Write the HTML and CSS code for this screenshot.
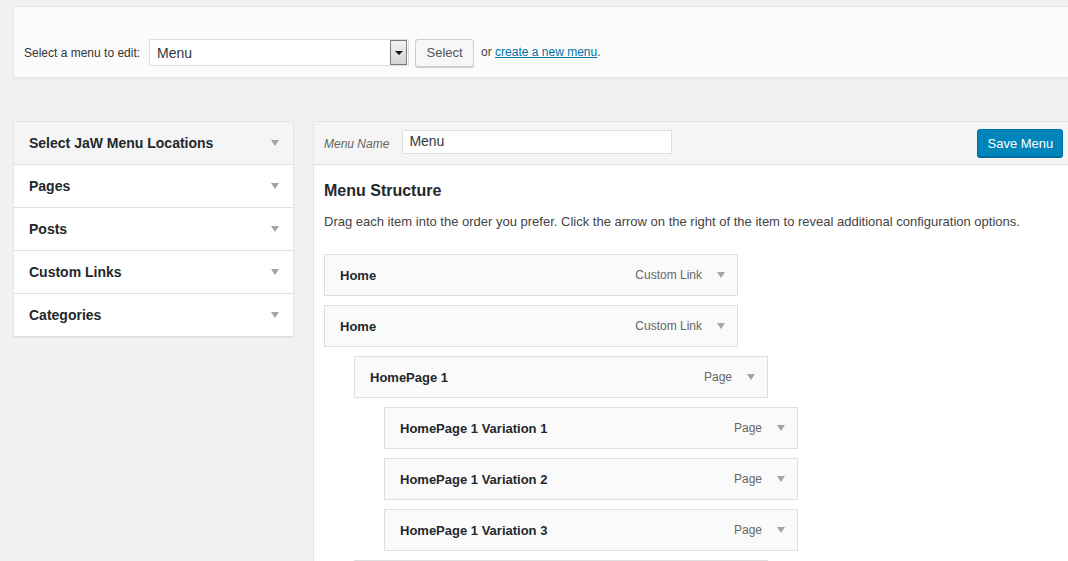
FILE: index.html
```html
<!DOCTYPE html>
<html>
<head>
<meta charset="utf-8">
<link rel="stylesheet" href="styles.css">
</head>
<body>
<div class="page">
  <div class="manage-menus">
    <label class="select-label">Select a menu to edit:</label>
    <div class="fake-select">
      <span class="fake-select-value">Menu</span>
      <span class="fake-select-btn"><span class="tri-black"></span></span>
    </div>
    <button class="btn">Select</button>
    <span class="or-text">or <a href="#" class="link">create a new menu</a>.</span>
  </div>

  <div class="main">
    <div class="sidebar">
      <div class="acc-row acc-open"><span class="acc-title">Select JaW Menu Locations</span><span class="tri"></span></div>
      <div class="acc-row"><span class="acc-title">Pages</span><span class="tri"></span></div>
      <div class="acc-row"><span class="acc-title">Posts</span><span class="tri"></span></div>
      <div class="acc-row"><span class="acc-title">Custom Links</span><span class="tri"></span></div>
      <div class="acc-row"><span class="acc-title">Categories</span><span class="tri"></span></div>
    </div>

    <div class="menu-panel">
      <div class="menu-header">
        <label class="menu-name-label">Menu Name</label>
        <div class="name-input">Menu</div>
        <button class="btn-primary">Save Menu</button>
      </div>
      <div class="menu-body">
        <h3 class="structure-title">Menu Structure</h3>
        <p class="structure-desc">Drag each item into the order you prefer. Click the arrow on the right of the item to reveal additional configuration options.</p>
        <ul class="menu-items">
          <li class="item depth-0"><span class="item-title">Home</span><span class="item-type">Custom Link</span><span class="tri"></span></li>
          <li class="item depth-0"><span class="item-title">Home</span><span class="item-type">Custom Link</span><span class="tri"></span></li>
          <li class="item depth-1"><span class="item-title">HomePage 1</span><span class="item-type">Page</span><span class="tri"></span></li>
          <li class="item depth-2"><span class="item-title">HomePage 1 Variation 1</span><span class="item-type">Page</span><span class="tri"></span></li>
          <li class="item depth-2"><span class="item-title">HomePage 1 Variation 2</span><span class="item-type">Page</span><span class="tri"></span></li>
          <li class="item depth-2"><span class="item-title">HomePage 1 Variation 3</span><span class="item-type">Page</span><span class="tri"></span></li>
          <li class="item depth-1 item-edge"></li>
        </ul>
      </div>
    </div>
  </div>
</div>
</body>
</html>
```

FILE: styles.css
```css
html, body {
  margin: 0;
  padding: 0;
  background: #f1f1f1;
  overflow: hidden;
  height: 561px;
}
body {
  font-family: "Liberation Sans", Arial, sans-serif;
  color: #444;
}
.page {
  width: 1100px;
  padding: 6px 0 0 13px;
}
.manage-menus {
  box-sizing: border-box;
  width: 1080px;
  height: 72px;
  background: #fbfbfb;
  border: 1px solid #e5e5e5;
  box-shadow: 0 1px 1px rgba(0,0,0,0.04);
  display: flex;
  align-items: center;
  padding: 30px 0 9px 10px;
}
.select-label {
  font-size: 12px;
  color: #333;
  margin-right: 9px;
}
.fake-select {
  box-sizing: border-box;
  width: 260px;
  height: 27px;
  background: #fff;
  border: 1px solid #ddd;
  display: flex;
  align-items: center;
  justify-content: space-between;
  padding-left: 7px;
}
.fake-select-value {
  font-size: 14px;
  color: #32373c;
}
.fake-select-btn {
  box-sizing: border-box;
  width: 17px;
  height: 25px;
  border: 1px solid #7a7a7a;
  background: linear-gradient(#f2f2f2, #d4d4d4);
  display: flex;
  align-items: center;
  justify-content: center;
  margin-right: 1px;
}
.tri-black {
  width: 0;
  height: 0;
  border-left: 4px solid transparent;
  border-right: 4px solid transparent;
  border-top: 4px solid #111;
}
.btn {
  box-sizing: border-box;
  height: 28px;
  width: 59px;
  margin-left: 6px;
  border: 1px solid #ccc;
  border-radius: 3px;
  background: #f7f7f7;
  box-shadow: 0 1px 0 #ccc;
  color: #555;
  font-family: inherit;
  font-size: 13px;
  padding: 0;
}
.or-text {
  font-size: 12px;
  color: #444;
  margin-left: 7px;
  position: relative;
  top: -1px;
}
.link {
  color: #0073aa;
  text-decoration: underline;
}

.main {
  display: flex;
  align-items: flex-start;
  margin-top: 43px;
  gap: 19px;
}
.sidebar {
  box-sizing: border-box;
  width: 281px;
  background: #fff;
  border: 1px solid #e5e5e5;
  border-bottom: none;
  box-shadow: 0 1px 1px rgba(0,0,0,0.04);
}
.acc-row {
  box-sizing: border-box;
  height: 43px;
  border-bottom: 1px solid #dfdfdf;
  display: flex;
  align-items: center;
  justify-content: space-between;
  padding: 0 14px 0 15px;
}
.acc-open {
  background: #f5f5f5;
}
.acc-title {
  font-size: 14px;
  font-weight: bold;
  color: #23282d;
}
.tri {
  width: 0;
  height: 0;
  border-left: 4px solid transparent;
  border-right: 4px solid transparent;
  border-top: 6px solid #a0a5aa;
}

.menu-panel {
  box-sizing: border-box;
  width: 770px;
  background: #fff;
  border: 1px solid #e5e5e5;
  min-height: 460px;
}
.menu-header {
  box-sizing: border-box;
  height: 43px;
  background: #f5f5f5;
  border-bottom: 1px solid #dfdfdf;
  display: flex;
  align-items: center;
  padding: 0 0 0 10px;
}
.menu-name-label {
  font-size: 12px;
  font-style: italic;
  color: #666;
  margin-top: 2px;
}
.name-input {
  box-sizing: border-box;
  width: 270px;
  height: 24px;
  margin-left: 13px;
  border: 1px solid #ddd;
  background: #fff;
  font-size: 14px;
  color: #32373c;
  padding: 2px 6px;
  margin-top: -3px;
}
.btn-primary {
  box-sizing: border-box;
  margin-left: 305px;
  width: 86px;
  height: 28px;
  background: #0085ba;
  border: 1px solid #0073aa;
  border-radius: 3px;
  box-shadow: 0 1px 0 #006799;
  color: #fff;
  font-family: inherit;
  font-size: 13px;
  padding: 0;
  margin-top: 0;
}
.menu-body {
  padding: 16px 10px 0 10px;
}
.structure-title {
  margin: 0;
  font-size: 16px;
  font-weight: bold;
  color: #23282d;
  line-height: 20px;
}
.structure-desc {
  margin: 12px 0 0 0;
  font-size: 13px;
  color: #444;
  line-height: 18px;
}
.menu-items {
  list-style: none;
  margin: 23px 0 0 0;
  padding: 0;
}
.item {
  box-sizing: border-box;
  width: 414px;
  height: 42px;
  margin-bottom: 9px;
  background: #fafafa;
  border: 1px solid #dfdfdf;
  display: flex;
  align-items: center;
  padding: 0 12px 0 15px;
}
.depth-1 { margin-left: 30px; }
.depth-2 { margin-left: 60px; }
.item-title {
  font-size: 13px;
  font-weight: bold;
  color: #23282d;
  flex: 1;
}
.item-type {
  font-size: 12px;
  color: #666;
  margin-right: 15px;
}
```
